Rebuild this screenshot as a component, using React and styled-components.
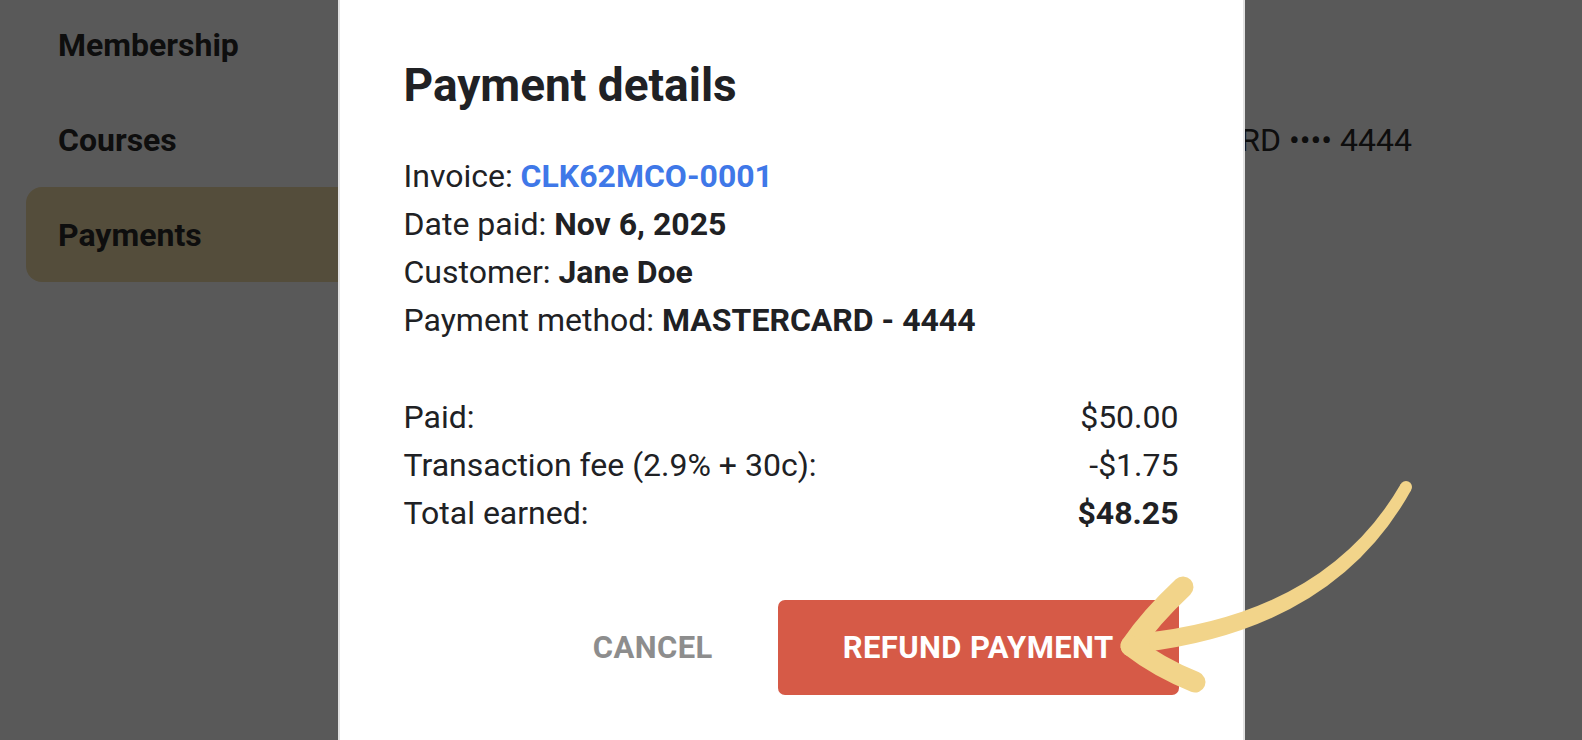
import React from 'react'
import styled, { createGlobalStyle } from 'styled-components'

const GlobalStyle = createGlobalStyle`
  html, body {
    margin: 0;
    padding: 0;
    background: #ffffff;
    overflow: hidden;
  }
  body {
    font-family: Roboto, "Liberation Sans", Arial, sans-serif;
    color: #2a2a2a;
  }
  * {
    box-sizing: border-box;
  }
`

const Page = styled.div`
  width: 1582px;
  height: 740px;
  display: flex;
  background: #ffffff;
`

const Sidebar = styled.nav`
  width: 420px;
  flex-shrink: 0;
  padding-left: 26px;
  margin-top: -3px;
  display: flex;
  flex-direction: column;
`

const NavItem = styled.div`
  height: 95px;
  padding-left: 32px;
  display: flex;
  align-items: center;
  border-radius: 16px;
  font-size: 32px;
  font-weight: 700;
  color: #2a2a2a;
  background: ${props => (props.$active ? '#f0dca8' : 'transparent')};
`

const Main = styled.main`
  flex: 1;
  padding-top: 92px;
  padding-right: 170px;
`

const PaymentRow = styled.div`
  height: 95px;
  display: flex;
  align-items: center;
  justify-content: flex-end;
  font-size: 32px;
  color: #2a2a2a;
`

const Overlay = styled.div`
  position: fixed;
  inset: 0;
  background: rgba(0, 0, 0, 0.65);
  display: flex;
  justify-content: center;
  align-items: flex-start;
`

const Dialog = styled.div`
  width: 907px;
  min-height: 780px;
  background: #ffffff;
  border-left: 2px solid #e2e2e2;
  border-right: 2px solid #e2e2e2;
  padding: 58px 64px 60px 64px;
  color: #202124;
`

const Title = styled.h2`
  margin: 0 0 40px;
  font-size: 46px;
  line-height: 54px;
  font-weight: 700;
  color: #202124;
`

const InfoList = styled.div`
  display: flex;
  flex-direction: column;
  margin-bottom: 49px;
`

const Line = styled.div`
  font-size: 32px;
  line-height: 48px;
  white-space: nowrap;
`

const Strong = styled.b`
  font-weight: 700;
`

const Link = styled.a`
  font-weight: 700;
  color: #3f78e8;
  text-decoration: none;
`

const Amounts = styled.div`
  display: flex;
  flex-direction: column;
`

const AmountRow = styled.div`
  display: flex;
  justify-content: space-between;
  font-size: 32px;
  line-height: 48px;
  font-weight: ${props => (props.$total ? 700 : 400)};

  span:first-child {
    font-weight: 400;
  }
`

const Actions = styled.div`
  margin-top: 63px;
  display: flex;
  justify-content: flex-end;
  align-items: center;
  gap: 33px;
`

const Button = styled.button`
  height: 95px;
  padding: 0 ${props => (props.$primary ? '65px' : '32px')};
  border: none;
  border-radius: 7px;
  font-family: Roboto, "Liberation Sans", Arial, sans-serif;
  font-size: 31px;
  font-weight: 700;
  text-transform: uppercase;
  letter-spacing: 0.4px;
  cursor: pointer;
  background: ${props => (props.$primary ? '#d65a47' : 'transparent')};
  color: ${props => (props.$primary ? '#ffffff' : '#8d8d8d')};
`

const ArrowLayer = styled.svg`
  position: fixed;
  top: 0;
  left: 0;
  pointer-events: none;
`

const Arrow = () => (
  <ArrowLayer width="1582" height="740" viewBox="0 0 1582 740">
    <g fill="#f2d48a">
      <path d="M1400.8 484.1 Q1325.2 614.7 1139 633.6 L1141 652.4 Q1334.8 629.3 1411.2 489.9 Z" />
      <circle cx="1406" cy="487" r="6" />
      <circle cx="1140" cy="643" r="9.5" />
    </g>
    <g fill="none" stroke="#f2d48a" strokeLinecap="round" strokeLinejoin="round" strokeWidth="21">
      <path d="M1183 587 Q1150 618 1131 646" />
      <path d="M1131 646 Q1158 667 1195 682" />
    </g>
  </ArrowLayer>
)

const App = () => {
  return (
    <>
      <GlobalStyle />
      <Page>
        <Sidebar>
          <NavItem>Membership</NavItem>
          <NavItem>Courses</NavItem>
          <NavItem $active>Payments</NavItem>
        </Sidebar>
        <Main>
          <PaymentRow>MASTERCARD •••• 4444</PaymentRow>
        </Main>
      </Page>

      <Overlay>
        <Dialog>
          <Title>Payment details</Title>
          <InfoList>
            <Line>Invoice: <Link href="#">CLK62MCO-0001</Link></Line>
            <Line>Date paid: <Strong>Nov 6, 2025</Strong></Line>
            <Line>Customer: <Strong>Jane Doe</Strong></Line>
            <Line>Payment method: <Strong>MASTERCARD - 4444</Strong></Line>
          </InfoList>
          <Amounts>
            <AmountRow><span>Paid:</span><span>$50.00</span></AmountRow>
            <AmountRow><span>Transaction fee (2.9% + 30c):</span><span>-$1.75</span></AmountRow>
            <AmountRow $total><span>Total earned:</span><span>$48.25</span></AmountRow>
          </Amounts>
          <Actions>
            <Button>Cancel</Button>
            <Button $primary>Refund payment</Button>
          </Actions>
        </Dialog>
      </Overlay>

      <Arrow />
    </>
  )
}

export default App
